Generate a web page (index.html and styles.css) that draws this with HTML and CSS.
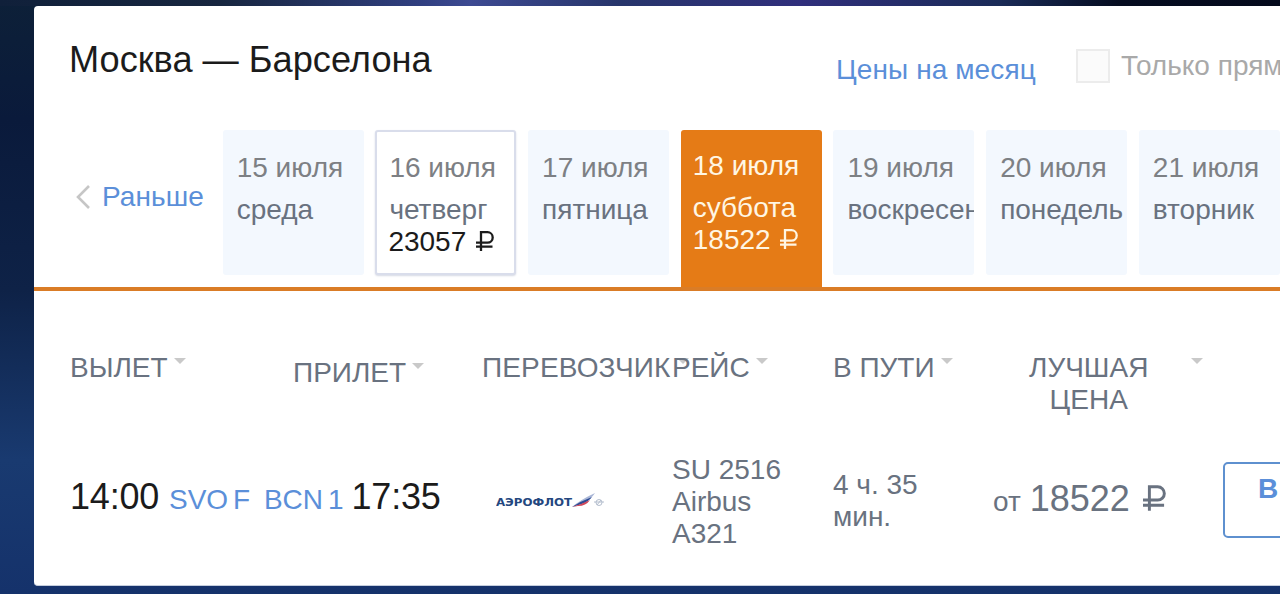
FILE: index.html
```html
<!DOCTYPE html>
<html lang="ru">
<head>
    <meta charset="UTF-8">
    <meta name="viewport" content="width=device-width, initial-scale=1.0">
    <title>Москва — Барселона</title>
    <link rel="stylesheet" href="styles.css">
</head>
<body>
    <svg width="0" height="0" class="defs">
        <symbol id="rub" viewBox="0 0 18 20">
            <path d="M5 20 V1.2 H11.5 A5.2 5.2 0 0 1 11.5 11.6 H0 M0 15.6 H16.5" fill="none" stroke="currentColor" stroke-width="2.3"/>
        </symbol>
    </svg>
    <div class="panel">
        <div class="header">
            <h1>Москва — Барселона</h1>
            <a class="month-link">Цены на месяц</a>
            <div class="direct">
                <span class="checkbox"></span>
                <span class="direct-label">Только прямые</span>
            </div>
        </div>

        <div class="dates">
            <div class="earlier">
                <svg class="chevron" width="16" height="26" viewBox="0 0 16 26">
                    <path d="M14 2 L3 13 L14 24" fill="none" stroke="#c6c6c6" stroke-width="2.6"/>
                </svg>
                <a>Раньше</a>
            </div>
            <div class="day">
                <div class="date">15 июля</div>
                <div class="weekday">среда</div>
            </div>
            <div class="day priced">
                <div class="date">16 июля</div>
                <div class="weekday">четверг</div>
                <div class="price">23057 <svg class="rub"><use href="#rub"/></svg></div>
            </div>
            <div class="day">
                <div class="date">17 июля</div>
                <div class="weekday">пятница</div>
            </div>
            <div class="day selected">
                <div class="date">18 июля</div>
                <div class="weekday">суббота</div>
                <div class="price">18522 <svg class="rub"><use href="#rub"/></svg></div>
            </div>
            <div class="day">
                <div class="date">19 июля</div>
                <div class="weekday">воскресенье</div>
            </div>
            <div class="day">
                <div class="date">20 июля</div>
                <div class="weekday">понедель</div>
            </div>
            <div class="day">
                <div class="date">21 июля</div>
                <div class="weekday">вторник</div>
            </div>
        </div>

        <div class="grid head">
            <div class="th">ВЫЛЕТ<i class="arrow"></i></div>
            <div class="th arrival-head">ПРИЛЕТ<i class="arrow"></i></div>
            <div class="th carrier-head">ПЕРЕВОЗЧИК<i class="arrow"></i></div>
            <div class="th">РЕЙС<i class="arrow"></i></div>
            <div class="th">В ПУТИ<i class="arrow"></i></div>
            <div class="th price-head"><span>ЛУЧШАЯ<br>ЦЕНА</span><i class="arrow"></i></div>
        </div>

        <div class="grid flight">
            <div class="point"><span class="time">14:00</span><span class="airport">SVO F</span></div>
            <div class="point"><span class="airport">BCN 1</span><span class="time arrival">17:35</span></div>
            <div class="carrier">
                <svg class="logo" width="110" height="18" viewBox="0 0 110 18">
                    <text x="0" y="13" textLength="76" lengthAdjust="spacingAndGlyphs">АЭРОФЛОТ</text>
                    <path d="M76 14 Q84 7 99 0 Q95 6 89 9 Z" fill="#a9b6d6"/>
                    <path d="M76 14 Q85 8 96 4 Q92 9 86 11 Z" fill="#2b4a95"/>
                    <path d="M76 14 Q86 11 94 7 Q90 13 82 13 Z" fill="#d0475a"/>
                    <g fill="none" stroke="#b3bdcd" stroke-width="1">
                        <circle cx="103" cy="9.5" r="3"/>
                        <path d="M98 9 H108 M101 12 L105 7"/>
                    </g>
                </svg>
            </div>
            <div class="number">SU 2516<br>Airbus<br>A321</div>
            <div class="duration">4 ч. 35<br>мин.</div>
            <div class="cost"><span class="from">от</span>18522 <svg class="rub"><use href="#rub"/></svg></div>
            <button class="choose">В</button>
        </div>
    </div>
</body>
</html>
```
FILE: styles.css
```css
* {
    box-sizing: border-box;
}
body {
    margin: 0;
    padding: 6px 0 0 34px;
    height: 594px;
    overflow: hidden;
    font-family: "Liberation Sans", Arial, sans-serif;
    font-size: 28px;
    line-height: 32px;
    color: #697280;
    background:
        linear-gradient(90deg, #10203a 0, #17263f 220px, #303f80 420px, #3d4a92 470px, #27356b 620px, #302f7c 800px, #1a2b57 1000px, #050c20 1120px, #040a1c 1280px) 0 0 / 100% 6px no-repeat,
        linear-gradient(180deg, #0d2038 0, #0a1a3b 120px, #0e2247 290px, #193a70 460px, #15326b 594px);
}
a {
    color: #5b8fd9;
}
.defs {
    display: none;
}
.rub {
    width: 18px;
    height: 20px;
    margin-left: 2px;
}
.panel {
    width: 1300px;
    height: 580px;
    background: #fff;
    border-radius: 4px;
    border-bottom: 1px solid #c5cedd;
    overflow: hidden;
    white-space: nowrap;
}
.header {
    display: flex;
    height: 124px;
    padding-left: 35px;
}
h1 {
    width: 767px;
    margin: 34px 0 0;
    font-size: 36.2px;
    font-weight: normal;
    line-height: 40px;
    color: #1b1b1b;
}
.month-link {
    width: 240px;
    margin-top: 48px;
    letter-spacing: 0.1px;
}
.direct {
    display: flex;
    gap: 11px;
    margin-top: 43px;
    color: #a9a9a9;
}
.direct-label {
    margin-top: 1px;
}
.checkbox {
    width: 34px;
    height: 34px;
    background: #fbfbfb;
    border: 2px solid #ececec;
}

/* date strip */
.dates {
    display: flex;
    gap: 11.7px;
    height: 161px;
    border-bottom: 4px solid #da7c26;
}
.earlier {
    display: flex;
    width: 177px;
    padding: 51px 0 0 41px;
}
.earlier a {
    letter-spacing: 0.1px;
}
.chevron {
    margin: 3px 11px 0 0;
}
.day {
    flex: none;
    width: 141px;
    height: 145px;
    padding: 22px 0 0 14px;
    background: #f3f8fe;
    border-radius: 3px;
    overflow: hidden;
}
.date {
    margin-bottom: 10px;
    color: #7d8084;
}
.price {
    color: #1b1b1b;
}
.priced {
    padding: 20px 0 0 12px;
    background: #fff;
    border: 2px solid #d9ddeb;
    box-shadow: 0 1px 2px #d5d9e4;
}
.priced .price {
    margin-left: -1px;
}
.selected {
    height: 157px;
    padding: 20px 0 0 12px;
    background: #e57b16;
    border-radius: 3px 3px 0 0;
}
.selected div {
    color: #fff6e3;
}

/* results table */
.grid {
    display: grid;
    grid-template-columns: 194px 218px 190px 161px 160px 230px 150px;
    padding-left: 36px;
}
.head {
    height: 162px;
    padding-top: 61px;
}
.th {
    display: flex;
    align-items: flex-start;
}
.arrow {
    margin: 6px 0 0 6px;
    border: 6px solid transparent;
    border-top-color: #c9c9c9;
    border-bottom: 0;
}
.arrival-head {
    padding: 5px 0 0 29px;
}
.carrier-head {
    letter-spacing: 0.15px;
}
.price-head {
    padding-left: 36px;
    text-align: center;
}
.price-head .arrow {
    margin-left: 43px;
}
.flight {
    align-items: start;
}
.point {
    display: flex;
    align-items: baseline;
    margin-top: 24px;
    line-height: 40px;
}
.time {
    font-size: 36px;
    letter-spacing: -0.2px;
    color: #1b1b1b;
}
.airport {
    color: #5b8fd9;
    letter-spacing: -0.1px;
    word-spacing: -2.5px;
}
.point .time + .airport {
    margin-left: 10px;
}
.point .arrival {
    margin-left: 8px;
}
.logo {
    display: block;
    margin: 40px 0 0 14px;
}
.logo text {
    font: bold 11px "DejaVu Sans", sans-serif;
    fill: #24477f;
}
.number {
    margin-top: 1px;
}
.duration {
    margin-top: 16px;
}
.cost {
    margin-top: 26px;
    font-size: 36px;
    line-height: 40px;
}
.cost .rub {
    width: 23px;
    height: 26px;
    margin-left: 3px;
}
.from {
    margin-right: 9px;
    font-size: 28px;
}
.choose {
    height: 76px;
    margin-top: 9px;
    padding: 0 0 22px 33px;
    font: bold 28px/32px "Liberation Sans", Arial, sans-serif;
    color: #5b8fd9;
    text-align: left;
    background: #fff;
    border: 2px solid #5e90cf;
    border-radius: 5px;
}
```
